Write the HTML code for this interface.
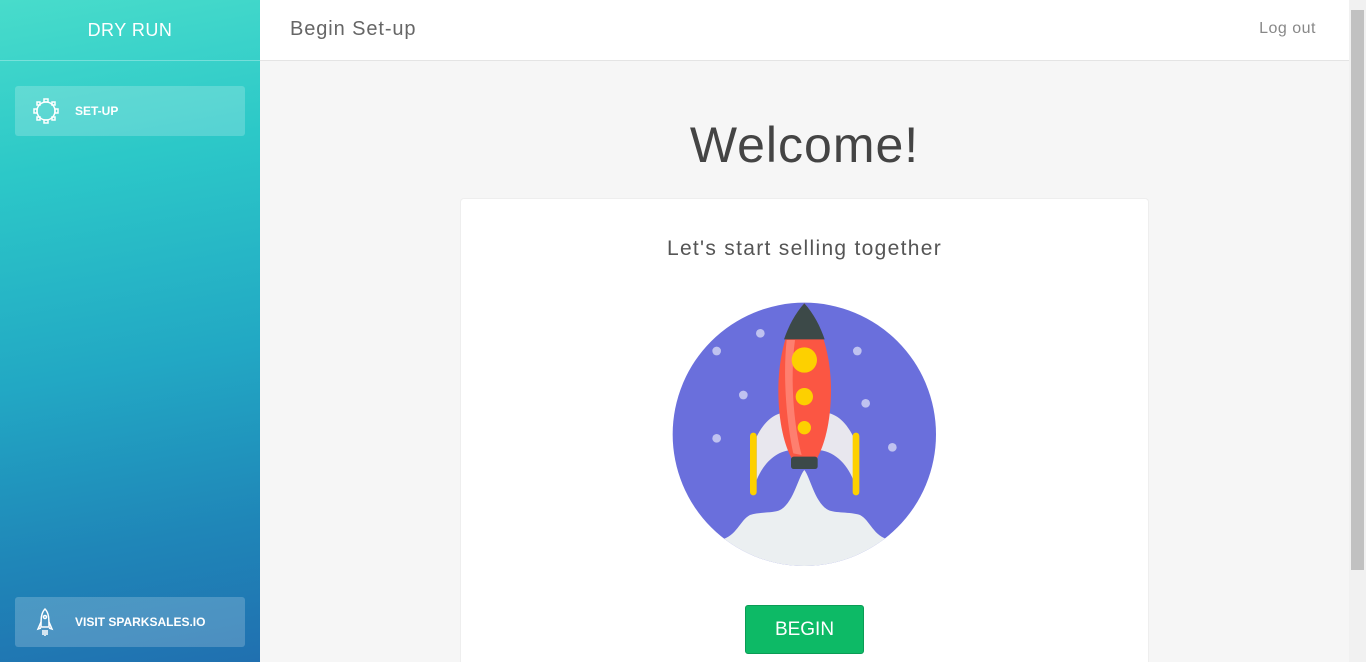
<!DOCTYPE html>
<html style="overflow:hidden;width:1366px;height:662px"><head><style>
*{margin:0;padding:0;box-sizing:border-box}
body{width:1366px;height:662px;overflow:hidden;font-family:"Liberation Sans",sans-serif;background:#f6f6f6;position:relative}
.side{position:absolute;left:0;top:0;width:260px;height:662px;background:linear-gradient(170deg,#48dccb 0%,#2cc8c8 25%,#22a8c4 55%,#1f86b8 80%,#2070b0 100%)}
.brand{height:61px;border-bottom:1px solid rgba(255,255,255,.3);color:#fff;font-size:18px;text-align:center;line-height:60px;letter-spacing:.5px}
.item{position:absolute;left:15px;width:230px;height:50px;background:rgba(255,255,255,.2);border-radius:3px;color:#fff;font-weight:bold;font-size:12px;line-height:50px;padding-left:60px}
.top{position:absolute;left:260px;top:0;width:1089px;height:61px;background:#fff;border-bottom:1px solid #e4e4e4}
.scroll{position:absolute;right:0;top:0;width:17px;height:662px;background:#f1f1f1}
.thumb{position:absolute;left:2px;top:10px;width:13px;height:560px;background:#c1c1c1}
.card{position:absolute;left:460px;top:198px;width:689px;height:464px;background:#fff;border-radius:4px 4px 0 0;border:1px solid #eee;border-bottom:none}
</style></head><body>
<div class="side">
<div class="brand">DRY RUN</div>
<div class="item" style="top:86px">SET-UP
<svg style="position:absolute;left:17px;top:11px" width="28" height="28" viewBox="0 0 28 28" fill="none" stroke="#fff" stroke-width="1.5"><circle cx="14" cy="14" r="9"/><rect x="12" y="2" width="4" height="3"/><rect x="12" y="23" width="4" height="3"/><rect x="2" y="12" width="3" height="4"/><rect x="23" y="12" width="3" height="4"/><rect x="5" y="5" width="3" height="3"/><rect x="20" y="5" width="3" height="3"/><rect x="5" y="20" width="3" height="3"/><rect x="20" y="20" width="3" height="3"/></svg></div>
<div class="item" style="top:597px">VISIT SPARKSALES.IO
<svg style="position:absolute;left:20px;top:10px" width="20" height="30" viewBox="0 0 20 30" fill="none" stroke="#fff" stroke-width="1.5"><path d="M10 2 C6 6 6 12 6 20 L14 20 C14 12 14 6 10 2Z"/><circle cx="10" cy="10" r="1.5"/><path d="M6 15 L3 22 L6 21 M14 15 L17 22 L14 21 M8 23 V28 M10 23 V29 M12 23 V28"/></svg></div>
</div>
<div class="top"><span style="position:absolute;left:30px;top:18px;font-size:20px;color:#666;letter-spacing:.9px">Begin Set-up</span><span style="position:absolute;right:33px;top:20px;font-size:16px;color:#888;letter-spacing:.5px">Log out</span></div>
<div class="scroll"><div class="thumb"></div></div>
<div style="position:absolute;left:260px;width:1089px;top:116px;text-align:center;font-size:50px;color:#444;letter-spacing:1px">Welcome!</div>
<div class="card">
<div style="position:absolute;left:0;right:0;top:38px;text-align:center;font-size:21px;color:#555;letter-spacing:1.3px">Let's start selling together</div>
<div style="position:absolute;left:284px;top:406px;width:119px;height:49px;background:#0dba66;border:1px solid #0a9c55;border-radius:3px;color:#fff;font-size:19px;text-align:center;line-height:47px">BEGIN</div>
</div>
<svg style="position:absolute;left:660px;top:290px" width="290" height="290" viewBox="0 0 870 870">
<defs><clipPath id="c"><circle cx="433" cy="433" r="395"/></clipPath></defs>
<circle cx="433" cy="433" r="395" fill="#6a6fdc"/>
<g clip-path="url(#c)">
<path d="M180 750 C230 740 240 690 270 675 C300 665 340 670 360 660 C400 640 415 560 433 540 C450 560 465 640 505 660 C525 670 570 665 600 675 C630 690 640 740 690 750 L690 870 L180 870Z" fill="#ebeff1"/>
</g>
<g fill="#bfc2f0"><circle cx="170" cy="183" r="13"/><circle cx="301" cy="130" r="13"/><circle cx="250" cy="315" r="13"/><circle cx="170" cy="445" r="13"/><circle cx="592" cy="183" r="13"/><circle cx="617" cy="340" r="13"/><circle cx="697" cy="472" r="13"/></g>
<path d="M290 440 C320 380 360 360 400 370 L400 480 C350 480 310 520 290 570Z" fill="#e8e7ee"/>
<path d="M580 440 C550 380 510 360 470 370 L470 480 C520 480 560 520 580 570Z" fill="#e8e7ee"/>
<rect x="270" y="428" width="20" height="188" rx="10" fill="#fdd000"/>
<rect x="578" y="428" width="20" height="188" rx="10" fill="#fdd000"/>
<path d="M433 40 C380 100 355 200 355 300 C355 400 375 470 395 505 L471 505 C491 470 513 400 513 300 C513 200 486 100 433 40Z" fill="#fb5643"/>
<path d="M433 40 C405 70 385 110 372 148 L494 148 C481 110 461 70 433 40Z" fill="#3c4948"/>
<path d="M380 150 C368 260 380 400 400 490 L425 495 C400 400 390 260 405 150Z" fill="#ff8a7a" opacity=".8"/>
<rect x="393" y="500" width="80" height="37" rx="8" fill="#3c4948"/>
<circle cx="433" cy="210" r="38" fill="#fdd000"/><circle cx="433" cy="320" r="26" fill="#fdd000"/><circle cx="433" cy="413" r="20" fill="#fdd000"/>
</svg>
</body></html>
